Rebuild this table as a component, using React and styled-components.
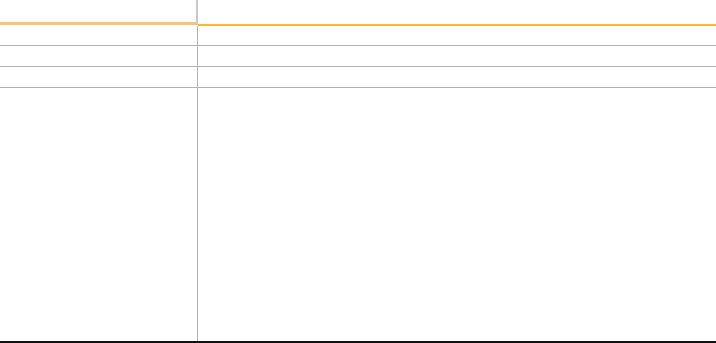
import styled, { createGlobalStyle } from 'styled-components';

const GlobalStyle = createGlobalStyle`
  html, body {
    margin: 0;
    padding: 0;
    background: #fff;
    font-family: 'Liberation Sans', Arial, sans-serif;
  }

  #root {
    height: 100vh;
  }
`;

const rows = [
  { id: 1, label: '', value: '', height: 19 },
  { id: 2, label: '', value: '', height: 20 },
  { id: 3, label: '', value: '', height: 20 },
];

const App = () => {
  return (
    <>
      <GlobalStyle />
      <Table>
        <HeaderRow>
          <HeadCell className="label" />
          <HeadCell className="value" />
        </HeaderRow>

        {rows.map((row) => (
          <Row key={row.id} $height={row.height}>
            <Cell className="label">{row.label}</Cell>
            <Cell>{row.value}</Cell>
          </Row>
        ))}

        <LastRow>
          <Cell className="label" />
          <Cell />
        </LastRow>
      </Table>
    </>
  );
};

const Table = styled.div`
  display: flex;
  flex-direction: column;
  width: 100%;
  height: 100%;
`;

const HeaderRow = styled.div`
  display: grid;
  grid-template-columns: 198px 1fr;
  align-items: start;
`;

const HeadCell = styled.div`
  box-sizing: border-box;
  height: 26px;
  border-bottom: 2px solid #ffb33f;

  &.label {
    height: 25px;
    padding-top: 1px;
    border-bottom: 3px solid #ffc36a;
    border-right: 2px solid #c9c9c9;
  }
`;

const Row = styled.div`
  display: grid;
  grid-template-columns: 198px 1fr;
  height: ${({ $height }) => $height}px;
  border-bottom: 1px solid #b3b3b3;
`;

const LastRow = styled(Row)`
  flex: 1;
  height: auto;
  border-bottom: 2px solid #111;
`;

const Cell = styled.div`
  font-size: 12px;
  color: #333;

  &.label {
    border-right: 1px solid #b3b3b3;
  }
`;

export default App;
